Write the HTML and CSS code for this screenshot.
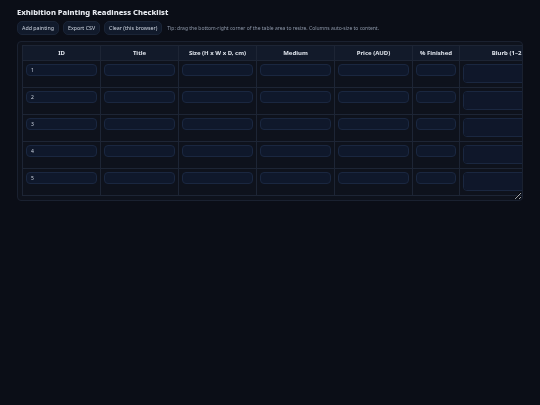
FILE: index.html
```html
<!DOCTYPE html>
<html lang="en">
<head>
<meta charset="utf-8">
<title>Exhibition Painting Readiness Checklist</title>
<link rel="stylesheet" href="styles.css">
</head>
<body>
<h1 class="title">Exhibition Painting Readiness Checklist</h1>
<div class="toolbar">
  <button class="btn">Add painting</button>
  <button class="btn">Export CSV</button>
  <button class="btn">Clear (this browser)</button>
  <span class="tip">Tip: drag the bottom-right corner of the table area to resize. Columns auto-size to content.</span>
</div>
<div class="table-wrap">
  <table class="grid">
    <colgroup>
      <col class="c-std"><col class="c-std"><col class="c-std"><col class="c-std"><col class="c-std"><col class="c-pct"><col class="c-blurb">
    </colgroup>
    <thead>
      <tr>
        <th>ID</th>
        <th>Title</th>
        <th>Size (H x W x D, cm)</th>
        <th>Medium</th>
        <th>Price (AUD)</th>
        <th>% Finished</th>
        <th>Blurb (1–2 sentences)</th>
      </tr>
    </thead>
    <tbody>
      <tr>
        <td><input class="field" value="1"></td>
        <td><input class="field"></td>
        <td><input class="field"></td>
        <td><input class="field"></td>
        <td><input class="field"></td>
        <td><input class="field"></td>
        <td><textarea class="area"></textarea></td>
      </tr>
      <tr>
        <td><input class="field" value="2"></td>
        <td><input class="field"></td>
        <td><input class="field"></td>
        <td><input class="field"></td>
        <td><input class="field"></td>
        <td><input class="field"></td>
        <td><textarea class="area"></textarea></td>
      </tr>
      <tr>
        <td><input class="field" value="3"></td>
        <td><input class="field"></td>
        <td><input class="field"></td>
        <td><input class="field"></td>
        <td><input class="field"></td>
        <td><input class="field"></td>
        <td><textarea class="area"></textarea></td>
      </tr>
      <tr>
        <td><input class="field" value="4"></td>
        <td><input class="field"></td>
        <td><input class="field"></td>
        <td><input class="field"></td>
        <td><input class="field"></td>
        <td><input class="field"></td>
        <td><textarea class="area"></textarea></td>
      </tr>
      <tr>
        <td><input class="field" value="5"></td>
        <td><input class="field"></td>
        <td><input class="field"></td>
        <td><input class="field"></td>
        <td><input class="field"></td>
        <td><input class="field"></td>
        <td><textarea class="area"></textarea></td>
      </tr>
    </tbody>
  </table>
</div>
</body>
</html>
```

FILE: styles.css
```css
* { box-sizing: border-box; }

html, body {
  background: #0b0e17;
}

body {
  margin: 0;
  padding: 6px 17px;
  font-family: "Noto Sans", "Open Sans", sans-serif;
  color: #e6e9ef;
}

.title {
  margin: 0;
  font-size: 7.6px;
  font-weight: 800;
  line-height: 12px;
}

.toolbar {
  margin-top: 3px;
  display: flex;
  align-items: center;
  gap: 4px;
}

.btn {
  font-family: "Noto Sans", sans-serif;
  font-size: 5.3px;
  color: #cfd6e2;
  background: #111a2b;
  border: 1px solid #1a2436;
  border-radius: 5px;
  height: 14px;
  padding: 0 4px;
  line-height: 12px;
}

.tip {
  margin-left: 1px;
  font-size: 5px;
  color: #8e98a9;
}

.table-wrap {
  margin-top: 6px;
  width: 506px;
  height: 160px;
  background: #0e121c;
  border: 1px solid #1a2130;
  border-radius: 4px;
  padding: 3px 4px;
  overflow: hidden;
  resize: both;
}

.grid {
  border-collapse: collapse;
  table-layout: fixed;
  width: 565px;
  border: 1px solid #1d2535;
}

.grid th {
  background: #121a2a;
  font-size: 6px;
  font-weight: 700;
  color: #dfe4ec;
  height: 15px;
  padding: 0 3px;
  text-align: center;
  white-space: nowrap;
  border: 1px solid #1d2535;
}

.grid td {
  padding: 3px 3px 0;
  border: 1px solid #1d2535;
  vertical-align: top;
  height: 27px;
}

.c-std { width: 78px; }
.c-pct { width: 47px; }
.c-blurb { width: 128px; }

.field {
  display: block;
  width: 100%;
  height: 12px;
  background: #0f182b;
  border: 1px solid #1a2740;
  border-radius: 4px;
  color: #cfd6e2;
  font-family: "Noto Sans", sans-serif;
  font-size: 5px;
  padding: 0 4px;
  outline: none;
}

.area {
  display: block;
  width: 100%;
  height: 18.5px;
  background: #0f172a;
  border: 1px solid #1a2740;
  border-radius: 4px;
  resize: none;
  margin: 0;
  outline: none;
}
```
